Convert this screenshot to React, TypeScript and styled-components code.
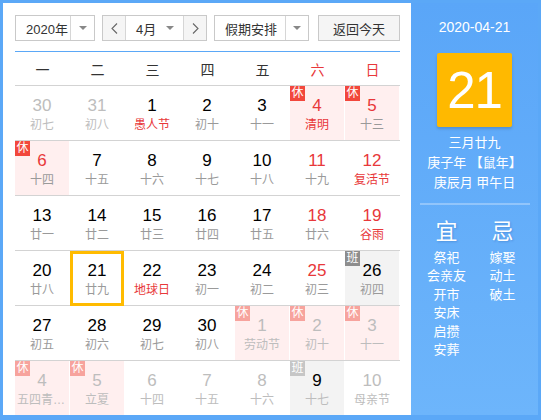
import React from "react";
import styled, { createGlobalStyle, css } from "styled-components";

const GlobalStyle = createGlobalStyle`
  html, body {
    margin: 0;
    padding: 0;
    background: #fff;
    font-family: "Liberation Sans", "Noto Sans CJK SC", sans-serif;
  }
`;

const BLUE = "#5ba8f7";
const RED = "#e8383a";

type Kind = "normal" | "off" | "work";

interface Day {
  d: number;
  lunar: string;
  faded?: boolean;
  redNum?: boolean;
  redLunar?: boolean;
  kind?: Kind;
  selected?: boolean;
}

const weeks: Day[][] = [
  [
    { d: 30, lunar: "初七", faded: true },
    { d: 31, lunar: "初八", faded: true },
    { d: 1, lunar: "愚人节", redLunar: true },
    { d: 2, lunar: "初十" },
    { d: 3, lunar: "十一" },
    { d: 4, lunar: "清明", redNum: true, redLunar: true, kind: "off" },
    { d: 5, lunar: "十三", redNum: true, kind: "off" },
  ],
  [
    { d: 6, lunar: "十四", redNum: true, kind: "off" },
    { d: 7, lunar: "十五" },
    { d: 8, lunar: "十六" },
    { d: 9, lunar: "十七" },
    { d: 10, lunar: "十八" },
    { d: 11, lunar: "十九", redNum: true },
    { d: 12, lunar: "复活节", redNum: true, redLunar: true },
  ],
  [
    { d: 13, lunar: "廿一" },
    { d: 14, lunar: "廿二" },
    { d: 15, lunar: "廿三" },
    { d: 16, lunar: "廿四" },
    { d: 17, lunar: "廿五" },
    { d: 18, lunar: "廿六", redNum: true },
    { d: 19, lunar: "谷雨", redNum: true, redLunar: true },
  ],
  [
    { d: 20, lunar: "廿八" },
    { d: 21, lunar: "廿九", selected: true },
    { d: 22, lunar: "地球日", redLunar: true },
    { d: 23, lunar: "初一" },
    { d: 24, lunar: "初二" },
    { d: 25, lunar: "初三", redNum: true },
    { d: 26, lunar: "初四", kind: "work" },
  ],
  [
    { d: 27, lunar: "初五" },
    { d: 28, lunar: "初六" },
    { d: 29, lunar: "初七" },
    { d: 30, lunar: "初八" },
    { d: 1, lunar: "劳动节", faded: true, kind: "off" },
    { d: 2, lunar: "初十", faded: true, kind: "off" },
    { d: 3, lunar: "十一", faded: true, kind: "off" },
  ],
  [
    { d: 4, lunar: "五四青年节", faded: true, kind: "off" },
    { d: 5, lunar: "立夏", faded: true, kind: "off" },
    { d: 6, lunar: "十四", faded: true },
    { d: 7, lunar: "十五", faded: true },
    { d: 8, lunar: "十六", faded: true },
    { d: 9, lunar: "十七", faded: true, kind: "work" },
    { d: 10, lunar: "母亲节", faded: true },
  ],
];

const weekdays = ["一", "二", "三", "四", "五", "六", "日"];
const goodItems = ["祭祀", "会亲友", "开市", "安床", "启攒", "安葬"];
const badItems = ["嫁娶", "动土", "破土"];

const Frame = styled.div`
  width: 541px;
  height: 420px;
  box-sizing: border-box;
  border-style: solid;
  border-color: ${BLUE};
  border-width: 3px 3px 5px 3px;
  display: flex;
`;

const Main = styled.div`
  width: 408px;
  box-sizing: border-box;
  padding: 12px 11px 0 12px;
  background: #fff;
`;

const Toolbar = styled.div`
  display: flex;
  height: 26px;
  gap: 7px;
  color: #333;
  font-size: 13px;
`;

const Control = styled.div<{ $width: number }>`
  width: ${({ $width }) => $width}px;
  height: 26px;
  box-sizing: border-box;
  border: 1px solid #c9c9c9;
  display: flex;
  background: #fff;
`;

const SelectLabel = styled.div<{ $width: number }>`
  width: ${({ $width }) => $width}px;
  box-sizing: border-box;
  padding-left: 10px;
  display: flex;
  align-items: center;
  border-right: 1px solid #d6d6d6;
`;

const ArrowCell = styled.div`
  flex: 1;
  display: flex;
  align-items: center;
  justify-content: center;
`;

const Caret = styled.span`
  width: 0;
  height: 0;
  border-left: 4px solid transparent;
  border-right: 4px solid transparent;
  border-top: 4px solid #888;
`;

const NavButton = styled.div<{ $side: "left" | "right" }>`
  width: 22px;
  display: flex;
  align-items: center;
  justify-content: center;
  background: #f5f5f5;
  ${({ $side }) =>
    $side === "left"
      ? css`border-right: 1px solid #d6d6d6;`
      : css`border-left: 1px solid #d6d6d6;`}
`;

const MonthLabel = styled.div`
  flex: 1;
  display: flex;
  align-items: center;
  justify-content: space-between;
  padding: 0 9px 0 10px;
`;

const TodayButton = styled.div`
  width: 82px;
  height: 26px;
  margin-left: 2px;
  box-sizing: border-box;
  border: 1px solid #c9c9c9;
  background: #f5f5f5;
  display: flex;
  align-items: center;
  justify-content: center;
`;

const BlueRule = styled.div`
  height: 1px;
  background: ${BLUE};
  margin-top: 10px;
`;

const WeekHeader = styled.div`
  display: grid;
  grid-template-columns: repeat(7, 55px);
  height: 33px;
  align-items: center;
  font-size: 14px;
`;

const WeekName = styled.div<{ $red: boolean }>`
  text-align: center;
  color: ${({ $red }) => ($red ? RED : "#333")};
`;

const WeekRow = styled.div`
  display: grid;
  grid-template-columns: repeat(7, 55px);
  height: 54px;
  border-top: 1px solid #d3d3d3;
`;

const Cell = styled.div<{ $kind: Kind; $selected: boolean }>`
  position: relative;
  box-sizing: border-box;
  border-right: 1px solid #fff;
  padding-top: 10px;
  text-align: center;
  background: ${({ $kind }) =>
    $kind === "off" ? "#ffefef" : $kind === "work" ? "#f3f3f3" : "transparent"};
  ${({ $selected }) =>
    $selected &&
    css`
      &::after {
        content: "";
        position: absolute;
        left: 0;
        right: 0;
        top: 0;
        bottom: -1px;
        border: 3px solid #ffbb00;
      }
    `}
`;

const DayNum = styled.div<{ $color: string }>`
  font-size: 17px;
  line-height: 20px;
  color: ${({ $color }) => $color};
`;

const Lunar = styled.div<{ $color: string }>`
  font-size: 12px;
  line-height: 18px;
  padding: 0 2px;
  white-space: nowrap;
  overflow: hidden;
  text-overflow: ellipsis;
  color: ${({ $color }) => $color};
`;

const Badge = styled.span<{ $bg: string }>`
  position: absolute;
  top: 0;
  left: 0;
  width: 15px;
  height: 15px;
  font-size: 12px;
  line-height: 15px;
  text-align: center;
  color: #fff;
  background: ${({ $bg }) => $bg};
`;

const Side = styled.div`
  flex: 1;
  background: linear-gradient(180deg, #5aa6f8 0%, #6db5fb 100%);
  color: #fff;
  display: flex;
  flex-direction: column;
  align-items: center;
  padding-top: 14px;
`;

const SideDate = styled.div`
  font-size: 14px;
  line-height: 20px;
`;

const BigDay = styled.div`
  width: 75px;
  height: 74px;
  margin-top: 16px;
  background: #ffb900;
  border-radius: 2px;
  box-shadow: 0 2px 3px rgba(0, 0, 0, 0.15);
  display: flex;
  align-items: center;
  justify-content: center;
  font-size: 51px;
  letter-spacing: -1px;
`;

const LunarLines = styled.div`
  margin-top: 6px;
  font-size: 13px;
  line-height: 20px;
  text-align: center;
`;

const SideRule = styled.div`
  width: 110px;
  height: 2px;
  margin-top: 10px;
  background: rgba(255, 255, 255, 0.3);
`;

const Almanac = styled.div`
  display: grid;
  grid-template-columns: 56px 56px;
  margin-top: 13px;
`;

const AlmanacCol = styled.div`
  display: flex;
  flex-direction: column;
  align-items: center;
`;

const AlmanacHead = styled.div`
  font-size: 22px;
  line-height: 28px;
  margin-bottom: 3px;
  text-shadow: 1px 1px 2px rgba(0, 60, 140, 0.25);
`;

const AlmanacItem = styled.div`
  font-size: 13px;
  line-height: 18.4px;
  white-space: nowrap;
`;

const Chevron = ({ dir }: { dir: "left" | "right" }) => (
  <svg width="7" height="11" viewBox="0 0 7 11">
    <path
      d={dir === "left" ? "M6 0.5 L1 5.5 L6 10.5" : "M1 0.5 L6 5.5 L1 10.5"}
      fill="none"
      stroke="#666"
      strokeWidth="1.1"
    />
  </svg>
);

const DayCell = ({ day }: { day: Day }) => {
  const kind = day.kind ?? "normal";
  let numColor = "#000";
  if (day.faded && kind !== "work") numColor = "#bdbdbd";
  else if (day.redNum) numColor = RED;
  let lunarColor = day.faded ? "#bdbdbd" : "#9a9a9a";
  if (day.redLunar && !day.faded) lunarColor = RED;
  let badge: React.ReactNode = null;
  if (kind === "off")
    badge = <Badge $bg={day.faded ? "#f7a39d" : "#f2473c"}>休</Badge>;
  if (kind === "work")
    badge = <Badge $bg={day.faded ? "#c6c6c6" : "#8d8d8d"}>班</Badge>;
  return (
    <Cell $kind={kind} $selected={!!day.selected}>
      {badge}
      <DayNum $color={numColor}>{day.d}</DayNum>
      <Lunar $color={lunarColor}>{day.lunar}</Lunar>
    </Cell>
  );
};

export default function App() {
  return (
    <>
      <GlobalStyle />
      <Frame>
        <Main>
          <Toolbar>
            <Control $width={80}>
              <SelectLabel $width={55}>2020年</SelectLabel>
              <ArrowCell>
                <Caret />
              </ArrowCell>
            </Control>
            <Control $width={105}>
              <NavButton $side="left">
                <Chevron dir="left" />
              </NavButton>
              <MonthLabel>
                4月
                <Caret />
              </MonthLabel>
              <NavButton $side="right">
                <Chevron dir="right" />
              </NavButton>
            </Control>
            <Control $width={95}>
              <SelectLabel $width={71}>假期安排</SelectLabel>
              <ArrowCell>
                <Caret />
              </ArrowCell>
            </Control>
            <TodayButton>返回今天</TodayButton>
          </Toolbar>
          <BlueRule />
          <WeekHeader>
            {weekdays.map((w, i) => (
              <WeekName key={w} $red={i >= 5}>
                {w}
              </WeekName>
            ))}
          </WeekHeader>
          {weeks.map((week, wi) => (
            <WeekRow key={wi}>
              {week.map((day, di) => (
                <DayCell key={di} day={day} />
              ))}
            </WeekRow>
          ))}
        </Main>
        <Side>
          <SideDate>2020-04-21</SideDate>
          <BigDay>21</BigDay>
          <LunarLines>
            <div>三月廿九</div>
            <div>庚子年 【鼠年】</div>
            <div>庚辰月 甲午日</div>
          </LunarLines>
          <SideRule />
          <Almanac>
            <AlmanacCol>
              <AlmanacHead>宜</AlmanacHead>
              {goodItems.map((t) => (
                <AlmanacItem key={t}>{t}</AlmanacItem>
              ))}
            </AlmanacCol>
            <AlmanacCol>
              <AlmanacHead>忌</AlmanacHead>
              {badItems.map((t) => (
                <AlmanacItem key={t}>{t}</AlmanacItem>
              ))}
            </AlmanacCol>
          </Almanac>
        </Side>
      </Frame>
    </>
  );
}
